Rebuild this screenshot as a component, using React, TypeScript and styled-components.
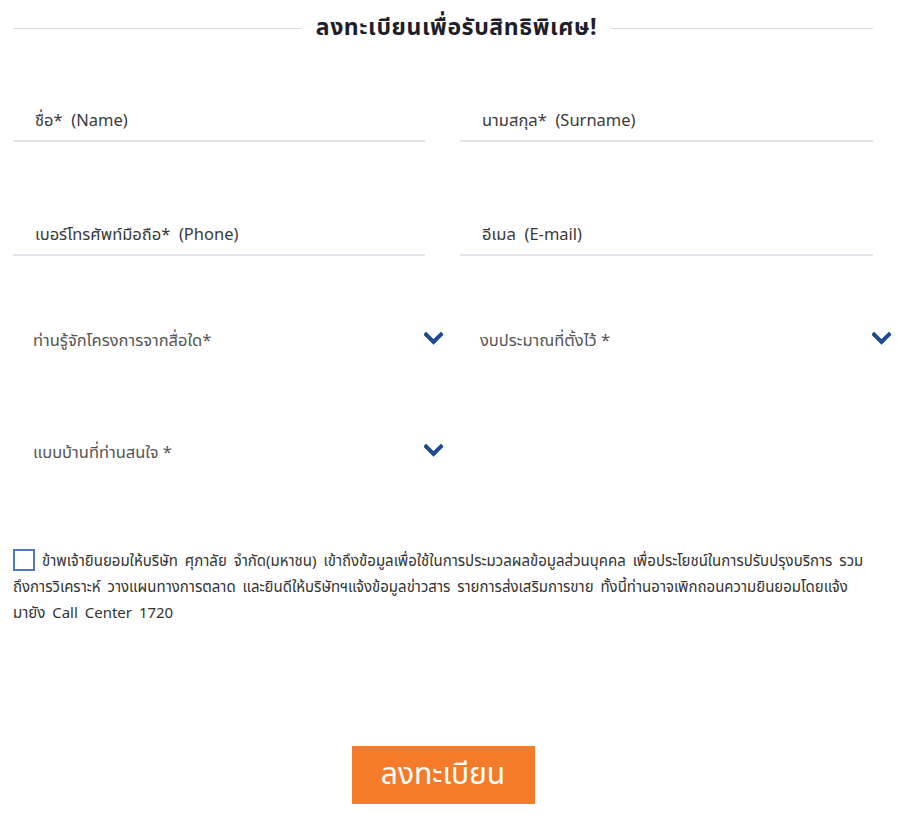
import React from "react";
import styled, { createGlobalStyle } from "styled-components";

const Global = createGlobalStyle`
  html, body { margin: 0; padding: 0; background: #fff; }
  body { font-family: "Noto Sans Thai", "Noto Sans", "Liberation Sans", sans-serif; color: #333; }
  * { box-sizing: border-box; }
`;

const Page = styled.div`
  width: 860px;
  margin-left: 13px;
  display: flex;
  flex-direction: column;
`;

const Header = styled.div`
  height: 56px;
  display: flex;
  align-items: center;
  gap: 14px;
`;

const Rule = styled.div<{ $grow: number }>`
  flex: ${(p) => p.$grow} 1 0;
  height: 1px;
  background: #dcdcdc;
`;

const Title = styled.h2`
  margin: 0;
  font-size: 23px;
  font-weight: 700;
  letter-spacing: 0.6px;
  color: #1f1f2b;
  white-space: nowrap;
`;

const Row = styled.div<{ $top: number }>`
  display: grid;
  grid-template-columns: 412px 413px;
  column-gap: 35px;
  margin-top: ${(p) => p.$top}px;
`;

const InputField = styled.div`
  height: 42px;
  border-bottom: 2px solid #e4e4ea;
  display: flex;
  align-items: center;
  padding-left: 22px;
  font-size: 16.5px;
  color: #3a3a3a;
`;

const SelectField = styled.div`
  position: relative;
  height: 42px;
  display: flex;
  align-items: center;
  padding-left: 20px;
  font-size: 16.5px;
  color: #555;
`;

const Chevron = styled.svg`
  position: absolute;
  right: -18px;
  top: 13px;
  width: 19px;
  height: 13px;
`;

const Consent = styled.div`
  margin-top: 76px;
  font-size: 15px;
  word-spacing: 3px;
  line-height: 26px;
  color: #333;
  white-space: nowrap;
`;

const Box = styled.span`
  display: inline-block;
  width: 22px;
  height: 22px;
  border: 2px solid #5177c4;
  vertical-align: -5px;
  margin-right: 7px;
`;

const ButtonWrap = styled.div`
  display: flex;
  justify-content: center;
  margin-top: 119px;
`;

const Submit = styled.button`
  width: 183px;
  height: 58px;
  border: none;
  background: #f47b2a;
  color: #fff;
  font-family: inherit;
  font-size: 30px;
  cursor: pointer;
`;

const Down = () => (
  <Chevron viewBox="0 0 19 13">
    <path d="M2 2.5 L9.5 10 L17 2.5" fill="none" stroke="#1d4a8f" strokeWidth="4" strokeLinecap="square" />
  </Chevron>
);

export default function App() {
  return (
    <>
      <Global />
      <Page>
        <Header>
          <Rule $grow={289} />
          <Title>ลงทะเบียนเพื่อรับสิทธิพิเศษ!</Title>
          <Rule $grow={262} />
        </Header>
        <Row $top={44}>
          <InputField>ชื่อ*&nbsp; (Name)</InputField>
          <InputField>นามสกุล*&nbsp; (Surname)</InputField>
        </Row>
        <Row $top={72}>
          <InputField>เบอร์โทรศัพท์มือถือ*&nbsp; (Phone)</InputField>
          <InputField>อีเมล&nbsp; (E-mail)</InputField>
        </Row>
        <Row $top={63}>
          <SelectField>ท่านรู้จักโครงการจากสื่อใด*<Down /></SelectField>
          <SelectField>งบประมาณที่ตั้งไว้ *<Down /></SelectField>
        </Row>
        <Row $top={70}>
          <SelectField>แบบบ้านที่ท่านสนใจ *<Down /></SelectField>
        </Row>
        <Consent>
          <Box />
          ข้าพเจ้ายินยอมให้บริษัท ศุภาลัย จำกัด(มหาชน) เข้าถึงข้อมูลเพื่อใช้ในการประมวลผลข้อมูลส่วนบุคคล เพื่อประโยชน์ในการปรับปรุงบริการ รวม
          <br />
          ถึงการวิเคราะห์ วางแผนทางการตลาด และยินดีให้บริษัทฯแจ้งข้อมูลข่าวสาร รายการส่งเสริมการขาย ทั้งนี้ท่านอาจเพิกถอนความยินยอมโดยแจ้ง
          <br />
          มายัง Call Center 1720
        </Consent>
        <ButtonWrap>
          <Submit>ลงทะเบียน</Submit>
        </ButtonWrap>
      </Page>
    </>
  );
}
